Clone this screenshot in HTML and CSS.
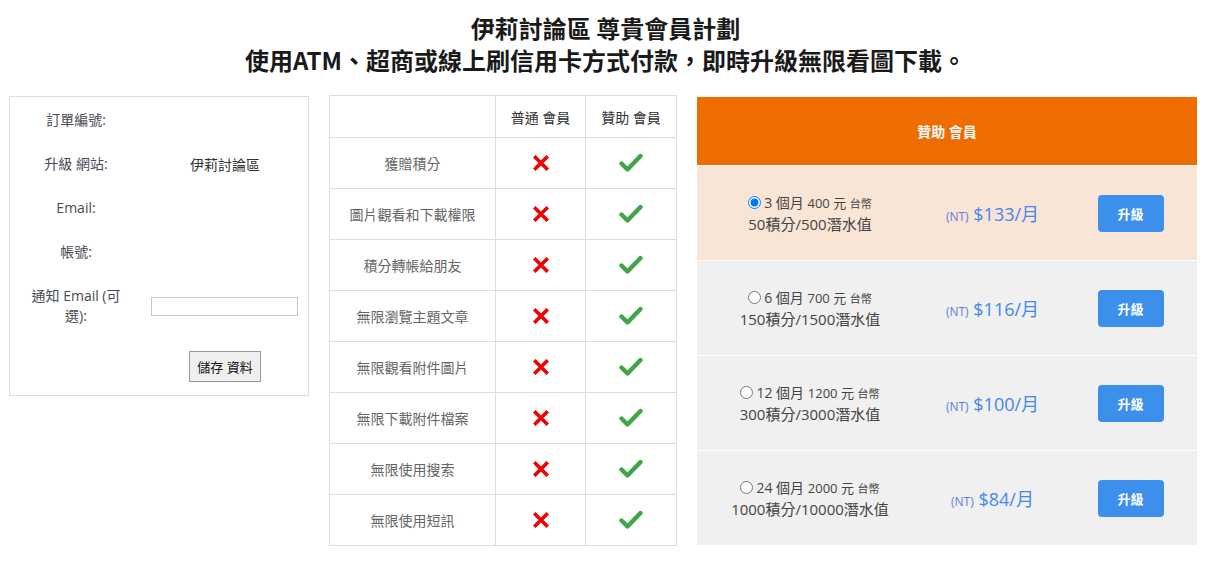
FILE: index.html
```html
<!DOCTYPE html>
<html lang="zh-TW">
  <head>
    <meta charset="UTF-8" />
    <meta name="viewport" content="width=device-width, initial-scale=1.0" />
    <title>伊莉討論區 尊貴會員計劃</title>
    <link rel="stylesheet" href="styles.css">
  </head>
  <body>
    <div class="page-title">
      <div>伊莉討論區 尊貴會員計劃</div>
      <div>使用ATM、超商或線上刷信用卡方式付款，即時升級無限看圖下載。</div>
    </div>

    <div class="content">
      <!-- 訂單資料 -->
      <div class="order-box">
        <div class="order-row">
          <div class="order-label">訂單編號:</div>
          <div class="order-value"></div>
        </div>
        <div class="order-row">
          <div class="order-label">升級 網站:</div>
          <div class="order-value">伊莉討論區</div>
        </div>
        <div class="order-row">
          <div class="order-label">Email:</div>
          <div class="order-value"></div>
        </div>
        <div class="order-row">
          <div class="order-label">帳號:</div>
          <div class="order-value"></div>
        </div>
        <div class="order-row row-tall">
          <div class="order-label">通知 Email (可<br />選):</div>
          <div class="order-value">
            <input type="text" class="notify-input" />
          </div>
        </div>
        <div class="order-row row-btn">
          <div class="order-label"></div>
          <div class="order-value">
            <button type="button" class="btn-save">儲存 資料</button>
          </div>
        </div>
      </div>

      <!-- 會員比較 -->
      <table class="compare">
        <thead>
          <tr>
            <th></th>
            <th>普通 會員</th>
            <th>贊助 會員</th>
          </tr>
        </thead>
        <tbody id="compare-body"></tbody>
      </table>

      <!-- 方案 -->
      <div class="plans">
        <div class="plans-head">贊助 會員</div>
        <div class="plan plan-active">
          <div class="plan-info">
            <label><input type="radio" name="plan" checked /><span class="m">3 個月</span> <span class="p">400 元</span> <span class="c">台幣</span></label>
            <div class="pts">50積分/500潛水值</div>
          </div>
          <div class="plan-price"><span class="nt">(NT)</span> $133/月</div>
          <div class="plan-btn"><button type="button" class="btn-upgrade">升級</button></div>
        </div>
        <div class="plan">
          <div class="plan-info">
            <label><input type="radio" name="plan" /><span class="m">6 個月</span> <span class="p">700 元</span> <span class="c">台幣</span></label>
            <div class="pts">150積分/1500潛水值</div>
          </div>
          <div class="plan-price"><span class="nt">(NT)</span> $116/月</div>
          <div class="plan-btn"><button type="button" class="btn-upgrade">升級</button></div>
        </div>
        <div class="plan">
          <div class="plan-info">
            <label><input type="radio" name="plan" /><span class="m">12 個月</span> <span class="p">1200 元</span> <span class="c">台幣</span></label>
            <div class="pts">300積分/3000潛水值</div>
          </div>
          <div class="plan-price"><span class="nt">(NT)</span> $100/月</div>
          <div class="plan-btn"><button type="button" class="btn-upgrade">升級</button></div>
        </div>
        <div class="plan">
          <div class="plan-info">
            <label><input type="radio" name="plan" /><span class="m">24 個月</span> <span class="p">2000 元</span> <span class="c">台幣</span></label>
            <div class="pts">1000積分/10000潛水值</div>
          </div>
          <div class="plan-price"><span class="nt">(NT)</span> $84/月</div>
          <div class="plan-btn"><button type="button" class="btn-upgrade">升級</button></div>
        </div>
      </div>
    </div>

    <script>
      // 功能列表
      const features = [
        "獲贈積分",
        "圖片觀看和下載權限",
        "積分轉帳給朋友",
        "無限瀏覽主題文章",
        "無限觀看附件圖片",
        "無限下載附件檔案",
        "無限使用搜索",
        "無限使用短訊",
      ];

      const crossIcon =
        '<svg width="16" height="16" viewBox="0 0 16 16"><path d="M2.5 2.5L13.5 13.5M13.5 2.5L2.5 13.5" stroke="#f00000" stroke-width="3.6" stroke-linecap="square"/></svg>';
      const checkIcon =
        '<svg width="24" height="20" viewBox="0 0 24 20"><path d="M2.5 10.5L8.5 16.5L21.5 3" fill="none" stroke="#3fa546" stroke-width="4.4" stroke-linecap="round" stroke-linejoin="round"/></svg>';

      const body = document.getElementById("compare-body");
      features.forEach(function (name) {
        const tr = document.createElement("tr");
        tr.innerHTML =
          "<td>" + name + "</td><td>" + crossIcon + "</td><td>" + checkIcon + "</td>";
        body.appendChild(tr);
      });
    </script>
  </body>
</html>
```

FILE: styles.css
```css
:root {
  --orange: #ef6c00;
  --peach: #f9e5d6;
  --grey: #f0f0f0;
  --blue: #3c8fea;
  --price: #4587ef;
  --border: #dddddd;
}

* {
  margin: 0;
  padding: 0;
  box-sizing: border-box;
}

body {
  font-family: "Open Sans", "Noto Sans CJK TC", sans-serif;
  color: #444;
  font-size: 14px;
  background: #fff;
}

.page-title {
  text-align: center;
  font-size: 24px;
  font-weight: bold;
  color: #1a1a1a;
  line-height: 32px;
  padding-top: 12px;
  font-family: "Noto Sans CJK TC", sans-serif;
}

.content {
  display: flex;
  align-items: flex-start;
  gap: 20px;
  padding-left: 9px;
  margin-top: 20px;
}

/* 訂單資料 */
.order-box {
  width: 300px;
  height: 300px;
  border: 1px solid var(--border);
  padding-top: 1px;
}

.order-row {
  display: flex;
  align-items: center;
  height: 44px;
}

.row-tall {
  height: 64px;
}

.row-btn {
  height: 56px;
}

.order-label {
  width: 132px;
  text-align: center;
  line-height: 20px;
  color: #4a4a55;
}

.order-value {
  flex: 1;
  text-align: center;
  color: #333;
}

.notify-input {
  display: block;
  width: 147px;
  height: 19px;
  margin-left: 9px;
  border: 1px solid #c8c8c8;
  background: #fff;
}

.btn-save {
  width: 72px;
  height: 31px;
  border: 1px solid #999;
  background: #efefef;
  font-family: inherit;
  font-size: 13px;
  color: #111;
}

/* 會員比較 */
.compare {
  border-collapse: collapse;
  width: 348px;
  margin-top: -1px;
}

.compare th,
.compare td {
  border: 1px solid var(--border);
  text-align: center;
  vertical-align: middle;
}

.compare th {
  height: 42px;
  font-weight: normal;
  color: #333;
}

.compare td {
  height: 51px;
  color: #666;
}

.compare th:first-child,
.compare td:first-child {
  width: 166px;
}

.compare th:nth-child(2) {
  width: 90px;
}

.compare svg {
  display: block;
  margin: 0 auto;
}

/* 方案 */
.plans {
  width: 500px;
  display: flex;
  flex-direction: column;
  gap: 1px;
  margin-top: 1px;
}

.plans-head {
  height: 68px;
  background: var(--orange);
  color: #fff;
  font-weight: bold;
  display: flex;
  align-items: center;
  justify-content: center;
}

.plan {
  height: 94px;
  background: var(--grey);
  display: grid;
  grid-template-columns: 226px 139px 135px;
  align-items: center;
}

.plan-active {
  background: var(--peach);
}

.plan-info {
  text-align: center;
  line-height: 20px;
  color: #444;
}

.plan-info input {
  width: 13px;
  height: 13px;
  margin: 0 3px 0 0;
  vertical-align: -1px;
}

.plan-info .p {
  font-size: 13px;
}

.plan-info .c {
  font-size: 11px;
}

.plan-info .pts {
  font-size: 15px;
}

.plan-price {
  text-align: center;
  color: var(--price);
  font-size: 18px;
}

.plan-price .nt {
  font-size: 12px;
  color: #5a7ee0;
}

.plan-btn {
  text-align: center;
}

.btn-upgrade {
  width: 66px;
  height: 37px;
  border: none;
  border-radius: 4px;
  background: var(--blue);
  color: #fff;
  font-weight: bold;
  font-size: 13px;
  font-family: inherit;
  margin-left: 2px;
}
```
